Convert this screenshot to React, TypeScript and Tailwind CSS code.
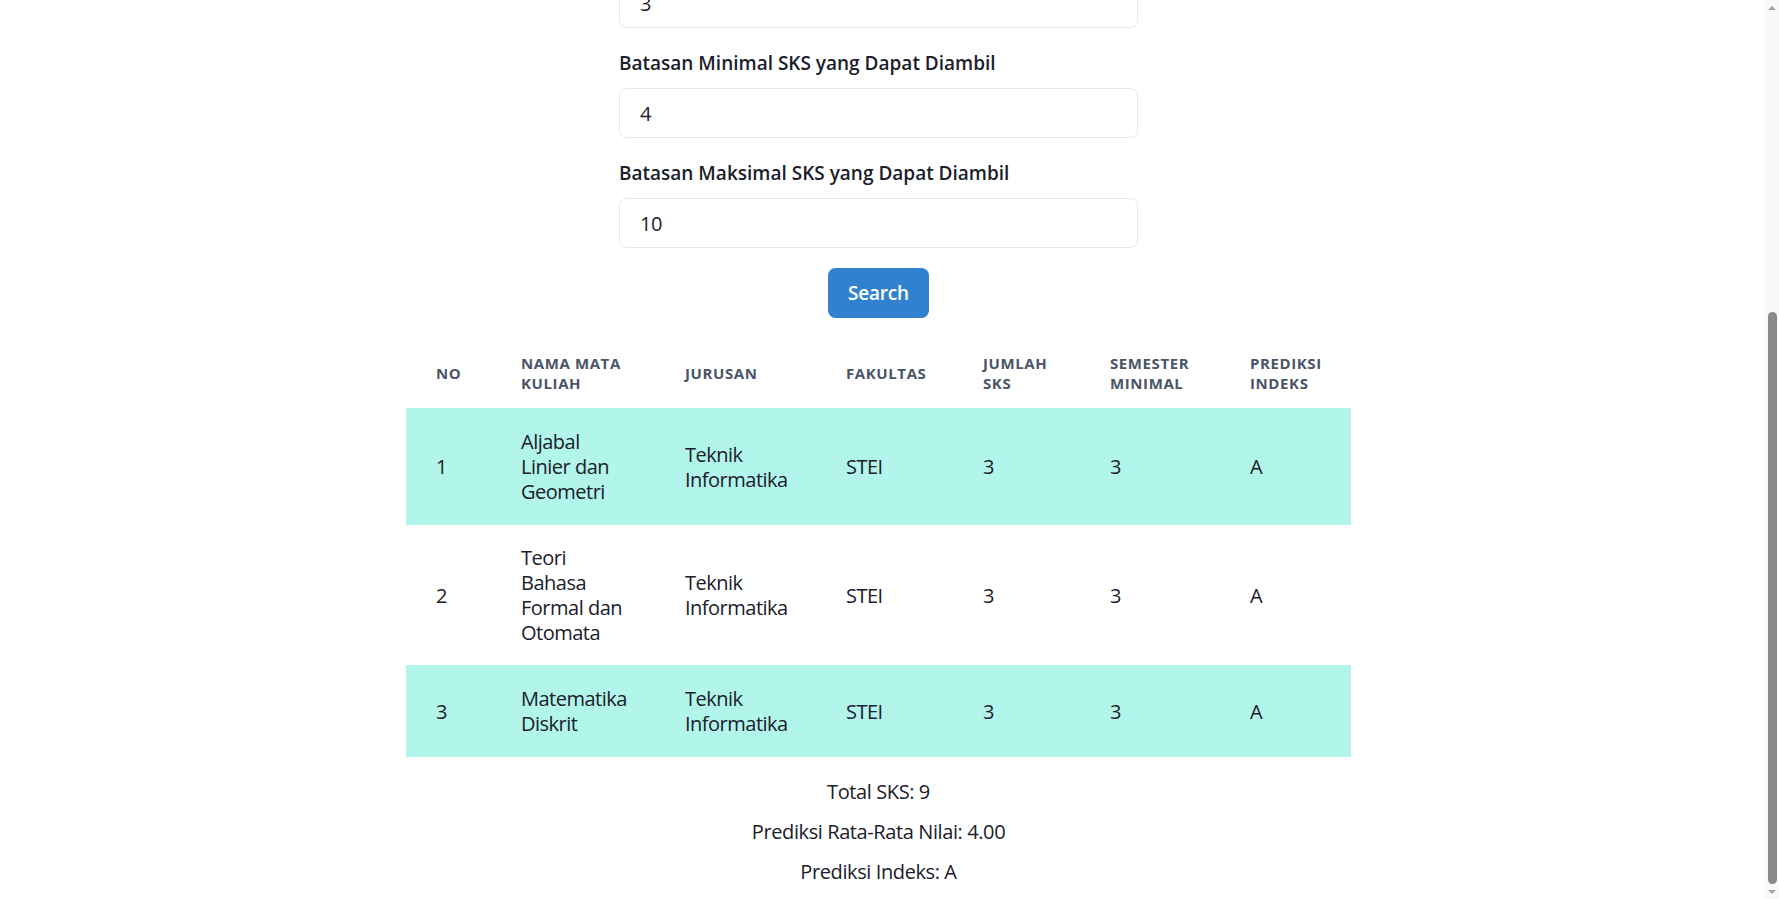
import { useLayoutEffect, useRef } from "react";

interface Course {
  no: number;
  name: string;
  jurusan: string;
  fakultas: string;
  sks: number;
  semester: number;
  indeks: string;
}

const courses: Course[] = [
  { no: 1, name: "Aljabal Linier dan Geometri", jurusan: "Teknik Informatika", fakultas: "STEI", sks: 3, semester: 3, indeks: "A" },
  { no: 2, name: "Teori Bahasa Formal dan Otomata", jurusan: "Teknik Informatika", fakultas: "STEI", sks: 3, semester: 3, indeks: "A" },
  { no: 3, name: "Matematika Diskrit", jurusan: "Teknik Informatika", fakultas: "STEI", sks: 3, semester: 3, indeks: "A" },
];

const headers: string[][] = [
  ["NO"],
  ["NAMA MATA", "KULIAH"],
  ["JURUSAN"],
  ["FAKULTAS"],
  ["JUMLAH", "SKS"],
  ["SEMESTER", "MINIMAL"],
  ["PREDIKSI", "INDEKS"],
];

const colWidths = ["w-[85px]", "w-[164px]", "w-[161px]", "w-[137px]", "w-[127px]", "w-[140px]", "w-[131px]"];

function Field({ label, value }: { label: string; value: string }) {
  return (
    <div className="flex flex-col">
      <label className="mb-[10px] text-[19px] leading-[30px] font-semibold text-[#1a202c]">
        {label}
      </label>
      <input
        readOnly
        value={value}
        className="h-[50px] w-full rounded-[7.5px] border border-[#e2e8f0] px-[20px] text-[20px] tracking-[-0.02em] text-[#1a202c] outline-none"
      />
    </div>
  );
}

function Scrollbar() {
  return (
    <div className="flex h-full w-[15px] shrink-0 flex-col bg-[#f9f9f9]">
      <div className="flex h-[15px] items-center justify-center">
        <div className="h-0 w-0 border-x-[4px] border-b-[4px] border-x-transparent border-b-[#a3a3a3]" />
      </div>
      <div className="flex flex-1 flex-col">
        <div className="mt-[297px] ml-[4px] h-[572px] w-[9px] rounded-full bg-[#8a8a8a]" />
      </div>
      <div className="flex h-[15px] items-center justify-center">
        <div className="h-0 w-0 border-x-[4px] border-t-[4px] border-x-transparent border-t-[#a3a3a3]" />
      </div>
    </div>
  );
}

export default function App() {
  const pageRef = useRef<HTMLDivElement>(null);

  useLayoutEffect(() => {
    const el = pageRef.current;
    if (el) el.scrollTop = el.scrollHeight;
  }, []);

  const totalSks = courses.reduce((sum, c) => sum + c.sks, 0);

  return (
    <div className="flex h-[899px] w-full overflow-hidden bg-white font-['Open_Sans','Noto_Sans',sans-serif] text-[#1a202c]">
      <div ref={pageRef} className="flex-1 overflow-hidden">
        <div className="w-[1757px] pt-[44px] pb-[12px]">
          <div className="flex flex-col items-center">
            {/* Form */}
            <div className="flex w-[519px] flex-col gap-[20px]">
              <Field label="Jurusan" value="Teknik Informatika" />
              <Field label="Semester Saat Ini" value="3" />
              <Field label="Batasan Minimal SKS yang Dapat Diambil" value="4" />
              <Field label="Batasan Maksimal SKS yang Dapat Diambil" value="10" />
            </div>

            <button className="mt-[20px] h-[50px] rounded-[7.5px] bg-[#3182ce] px-[20px] text-[19px] font-semibold tracking-[-0.01em] text-white">
              Search
            </button>

            {/* Result table */}
            <table className="mt-[20px] w-[945px] table-fixed border-collapse">
              <colgroup>
                {colWidths.map((w, i) => (
                  <col key={i} className={w} />
                ))}
              </colgroup>
              <thead>
                <tr>
                  {headers.map((h, i) => (
                    <th
                      key={i}
                      className="border-b border-[#b2f5ea] px-[30px] py-[15px] text-left align-middle text-[15px] leading-[20px] font-bold tracking-[0.04em] text-[#4a5568]"
                    >
                      {h.map((line, j) => (
                        <div key={j} className="whitespace-nowrap">
                          {line}
                        </div>
                      ))}
                    </th>
                  ))}
                </tr>
              </thead>
              <tbody>
                {courses.map((c, i) => (
                  <tr key={c.no} className={i % 2 === 0 ? "bg-[#b2f5ea]" : "bg-white"}>
                    {[c.no, c.name, c.jurusan, c.fakultas, c.sks, c.semester, c.indeks].map((v, j) => (
                      <td
                        key={j}
                        className="border-b border-[#b2f5ea] px-[30px] py-[20px] align-middle text-[20px] leading-[25px] tracking-[-0.025em]"
                      >
                        {v}
                      </td>
                    ))}
                  </tr>
                ))}
              </tbody>
            </table>

            {/* Summary */}
            <div className="mt-[20px] flex flex-col items-center gap-[10px] text-[20px] leading-[30px] tracking-[-0.02em]">
              <p>Total SKS: {totalSks}</p>
              <p>Prediksi Rata-Rata Nilai: 4.00</p>
              <p>Prediksi Indeks: A</p>
            </div>
          </div>
        </div>
      </div>
      <Scrollbar />
    </div>
  );
}
